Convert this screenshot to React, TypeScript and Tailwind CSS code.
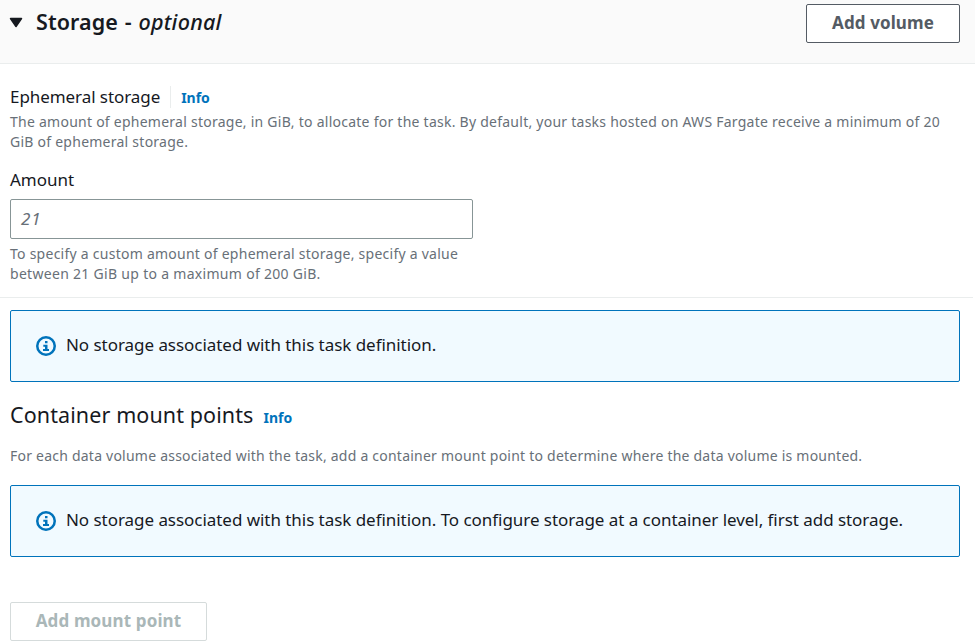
import React from "react";

function InfoIcon() {
  return (
    <svg className="size-5 shrink-0" viewBox="0 0 20 20" fill="none">
      <circle cx="10" cy="10" r="8.75" stroke="#0073bb" strokeWidth="2.5" />
      <path d="M9 5h2.500v2.300H9zM7.300 8.700h4.200V13H13v2H7v-2h2v-2.300H7.300z" fill="#0073bb" />
    </svg>
  );
}

function Notice({ children }: { children: React.ReactNode }) {
  return (
    <div className="ml-[10px] flex h-[72px] w-[950px] items-center gap-[10px] rounded-[2px] border border-[#0073bb] bg-[#f1faff] pl-[25px] text-[#16191f]">
      <InfoIcon />
      <span className="pb-[2px] text-[17px] leading-6 tracking-[-0.045px]">{children}</span>
    </div>
  );
}

export default function App() {
  return (
    <main className="h-[644px] w-[975px] overflow-hidden bg-white font-['Noto_Sans',sans-serif] whitespace-nowrap text-[#16191f]">
      <header className="flex h-16 items-start justify-between border-b border-[#eaeded] bg-[#fafafa] pr-[15px] pl-[9px]">
        <div className="flex items-center pt-[5px]">
          <svg className="h-[11px] w-[14px]" viewBox="0 0 14 11">
            <path d="M1.500 1.500h11L7 9.500z" fill="#16191f" stroke="#16191f" strokeWidth="1.500" strokeLinejoin="round" />
          </svg>
          <h2 className="ml-[13px] text-[21.5px] leading-[34px] font-semibold tracking-[0.1px]">
            Storage <span className="mx-[1px]">-</span>{" "}
            <span className="font-medium tracking-[0.25px] italic">optional</span>
          </h2>
        </div>
        <button className="mt-1 h-[39px] w-[154px] rounded-[2px] border border-[#545b64] bg-white pb-[2px] text-[17px] leading-[34px] font-bold tracking-[0.1px] text-[#545b64]">
          Add volume
        </button>
      </header>

      <section className="h-[234px] w-[973px] border-b border-[#eaeded] pt-[21px] pl-[10px]">
        <div className="flex h-[24px] items-center">
          <h3 className="text-[17px] leading-6 tracking-[-0.07px]">Ephemeral storage</h3>
          <span className="ml-[10px] h-[22px] w-px bg-[#eaeded]" />
          <a className="ml-[10px] text-[14px] font-bold text-[#0073bb]">Info</a>
        </div>
        <p className="mt-[3px] text-[14px] leading-5 tracking-[0.25px] text-[#687078]">
          The amount of ephemeral storage, in GiB, to allocate for the task. By default, your tasks hosted on AWS Fargate receive a minimum of 20
          <br />
          GiB of ephemeral storage.
        </p>
        <label className="mt-4 block text-[17px] leading-6">Amount</label>
        <div className="mt-[7px] flex h-10 w-[463px] items-center rounded-[2px] border border-[#879596] pl-[10px] text-[17px] tracking-[0.8px] text-[#687078] italic">21</div>
        <p className="mt-[5px] text-[14px] leading-5 tracking-[0.25px] text-[#687078]">
          To specify a custom amount of ephemeral storage, specify a value
          <br />
          <span className="tracking-[0.3px]">between 21 GiB up to a maximum of 200 GiB.</span>
        </p>
      </section>

      <section className="pt-3">
        <Notice>No storage associated with this task definition.</Notice>
        <div className="mt-[17px] flex h-8 items-baseline pl-[10px]">
          <h2 className="text-[21.5px] leading-8 tracking-[0.1px]">Container mount points</h2>
          <a className="ml-[10px] text-[14px] font-bold text-[#0073bb]">Info</a>
        </div>
        <p className="mt-[15px] mb-[19px] pl-[10px] text-[14px] leading-5 tracking-[0.225px] text-[#687078]">
          For each data volume associated with the task, add a container mount point to determine where the data volume is mounted.
        </p>
        <Notice>
          No storage associated with this task definition. To configure storage at a container level, first add storage.
        </Notice>
        <button className="mt-[45px] ml-[10px] block h-[39px] w-[197px] rounded-[2px] border border-[#d5dbdb] bg-white pb-[2px] text-[17px] leading-[34px] font-bold tracking-[0.13px] text-[#aab7b8]">
          Add mount point
        </button>
      </section>
    </main>
  );
}
